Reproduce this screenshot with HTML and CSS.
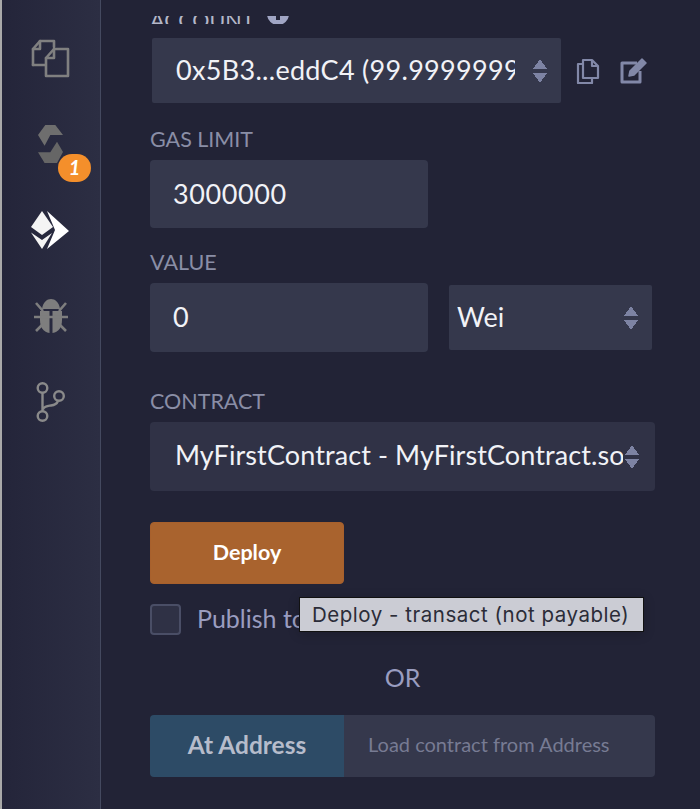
FILE: index.html
```html
<!DOCTYPE html>
<html lang="en">
<head>
  <meta charset="UTF-8">
  <meta name="viewport" content="width=device-width, initial-scale=1.0">
  <title>Deploy and run transactions</title>
  <link rel="stylesheet" href="styles.css">
</head>
<body>
  <nav class="sidebar">
    <div class="side-item">
      <svg width="40" height="40" viewBox="0 0 40 40" fill="none" stroke="#808080" stroke-width="2.600" stroke-linejoin="round" stroke-linecap="round">
        <path d="M2 27V11L9 3H23V9"/>
        <path d="M2 11H9V3"/>
        <path d="M2 27H14"/>
        <path d="M15 20L23 11H37V38H15Z"/>
        <path d="M15 20H23V11"/>
      </svg>
    </div>
    <div class="side-item">
      <svg width="26" height="38" viewBox="0 0 26 38">
        <path d="M0 10L7.300 0H17.300L25 10H12.300L6.600 20.700Z" fill="#6e6e6e"/>
        <path d="M0 27.300H12.300L19 16.700L25 27L19 38H6.600Z" fill="#666"/>
      </svg>
      <span class="badge">1</span>
    </div>
    <div class="side-item">
      <svg width="40" height="40" viewBox="0 0 40 40" fill="#fff">
        <path d="M11 1L0 17L11 25L22 17Z" fill="#f4f4f4"/>
        <path d="M0 22.500L11 30L21 23L11 39Z" fill="#f4f4f4"/>
        <path d="M16 1L38 21L16 39L24 20Z"/>
      </svg>
    </div>
    <div class="side-item">
      <svg width="36" height="36" viewBox="0 0 36 36" fill="#7e7e7e">
        <path d="M9 11C10 4 14 1 18 1C22 1 26 4 27 11Z"/>
        <path d="M7 13H16.500V35C10 34 7 29 7 22Z"/>
        <path d="M29 13H19.500V35C26 34 29 29 29 22Z"/>
        <path d="M1 19H35M3 5L10 13M33 5L26 13M3 33L10 26M33 33L26 26" stroke="#7e7e7e" stroke-width="2.600" fill="none"/>
      </svg>
    </div>
    <div class="side-item">
      <svg width="30" height="40" viewBox="0 0 30 40" fill="none" stroke="#8a8a8a" stroke-width="2.400">
        <circle cx="6.500" cy="6" r="4.800"/>
        <circle cx="6.500" cy="34" r="4.800"/>
        <circle cx="23" cy="14" r="4.800"/>
        <path d="M6.500 11V29M7 27C9 24 12 24 15 23.500C19 23 21 21.500 22 19"/>
      </svg>
    </div>
  </nav>

  <main class="panel">
    <div class="label label-cut">
      <span>ACCOUNT</span>
      <span class="info-dot"></span>
    </div>
    <div class="account-row">
      <div class="select select-account">
        <span class="select-text">0x5B3...eddC4 (99.9999999999 ether)</span>
        <span class="arrows"></span>
      </div>
      <svg class="tool-icon" width="24" height="26" viewBox="0 0 24 26" fill="none" stroke="#8288a8" stroke-width="2.200" stroke-linejoin="round">
        <path d="M7 20V2H16L22 8V20Z"/>
        <path d="M16 2V8H22"/>
        <path d="M7 6H2V25H16V20"/>
      </svg>
      <svg class="tool-icon tool-edit" width="28" height="26" viewBox="0 0 28 26" fill="none" stroke="#8288a8" stroke-width="3" stroke-linejoin="round">
        <path d="M17 5H2V24H20V13"/>
        <path d="M10 13L9 18L14 17L26 5L22 1Z" fill="#8288a8" stroke-width="1.500"/>
      </svg>
    </div>

    <div class="label label-gas">GAS LIMIT</div>
    <div class="input input-half">3000000</div>

    <div class="label label-value">VALUE</div>
    <div class="value-row">
      <div class="input input-half">0</div>
      <div class="select select-unit">
        <span class="select-text">Wei</span>
        <span class="arrows"></span>
      </div>
    </div>

    <div class="label label-contract">CONTRACT</div>
    <div class="select select-contract">
      <span class="select-text">MyFirstContract - MyFirstContract.sol</span>
      <span class="arrows"></span>
    </div>

    <button class="btn-deploy">Deploy</button>

    <div class="publish-row">
      <span class="checkbox"></span>
      <span class="publish-text">Publish to IPFS</span>
      <div class="tooltip">Deploy - transact (not payable)</div>
    </div>

    <div class="or">OR</div>

    <div class="address-row">
      <button class="btn-address">At Address</button>
      <div class="address-input">Load contract from Address</div>
    </div>
  </main>
</body>
</html>
```

FILE: styles.css
```css
* {
  box-sizing: border-box;
}

html, body {
  height: 100%;
}

body {
  margin: 0;
  display: flex;
  overflow: hidden;
  background: #222336;
  color: #f1f2f7;
  font-family: "Lato", "Noto Sans", sans-serif;
}

.sidebar {
  width: 101px;
  flex: none;
  padding-top: 15px;
  background: linear-gradient(to right, #24253a, #2c2e43);
  border-left: 2px solid #a9a9a9;
  border-right: 1px solid #44495f;
}

.side-item {
  position: relative;
  height: 86px;
  display: flex;
  align-items: center;
  justify-content: center;
}

.badge {
  position: absolute;
  left: 56px;
  top: 53px;
  width: 33px;
  height: 28px;
  border-radius: 14px;
  background: #f48f2b;
  color: #fff;
  font-size: 20px;
  font-weight: 700;
  font-style: italic;
  line-height: 27px;
  text-align: center;
}

.panel {
  flex: 1;
  padding: 16px 45px 0 49px;
}

.label {
  color: #8a8ea6;
  font-size: 21.500px;
  line-height: 24px;
}

.label-cut {
  height: 8px;
  overflow: hidden;
  display: flex;
  align-items: flex-end;
  gap: 13px;
  line-height: 8px;
  color: #b4b7c8;
}

.info-dot {
  position: relative;
  width: 22px;
  height: 22px;
  flex: none;
  border-radius: 50%;
  background: #a0a5c4;
  margin-bottom: -1px;
}

.info-dot::after {
  content: "";
  position: absolute;
  left: 9px;
  bottom: 5px;
  width: 4px;
  height: 12px;
  background: #222336;
}

.account-row {
  display: flex;
  align-items: center;
  margin-top: 14px;
}

.select {
  display: flex;
  align-items: center;
  background: #35384c;
  font-size: 27px;
}

.select-text {
  flex: 1;
  min-width: 0;
  padding-bottom: 3px;
  overflow: hidden;
  white-space: nowrap;
}

.arrows {
  flex: none;
  width: 14px;
  height: 24px;
  background:
    linear-gradient(to top left, #7d83a3 50%, transparent 50%) left top / 7px 10px no-repeat,
    linear-gradient(to top right, #7d83a3 50%, transparent 50%) right top / 7px 10px no-repeat,
    linear-gradient(to bottom left, #7d83a3 50%, transparent 50%) left bottom / 7px 10px no-repeat,
    linear-gradient(to bottom right, #7d83a3 50%, transparent 50%) right bottom / 7px 10px no-repeat;
}

.select-account {
  width: 409px;
  height: 65px;
  margin-left: 2px;
  padding: 0 14px 0 24px;
  gap: 18px;
  border-radius: 2px;
  letter-spacing: 0.300px;
}

.tool-icon {
  margin-left: 15px;
}

.tool-edit {
  margin-left: 20px;
}

.input {
  display: flex;
  align-items: center;
  height: 68px;
  padding: 0 0 2px 23px;
  background: #35384c;
  border-radius: 4px;
  font-size: 27px;
  letter-spacing: 0.600px;
}

.input-half {
  width: 278px;
}

.label-gas {
  margin-top: 24px;
}

.label-value {
  margin-top: 22px;
}

.label-contract {
  margin-top: 37px;
}

.label-value + .value-row {
  margin-top: 9px;
}

.label-gas + .input,
.label-contract + .select {
  margin-top: 9px;
}

.value-row {
  display: flex;
  align-items: center;
  gap: 21px;
}

.value-row .input {
  height: 69px;
}

.select-unit {
  width: 203px;
  height: 65px;
  padding: 0 14px 0 8px;
  border-radius: 2px;
}

.select-contract {
  width: 505px;
  height: 69px;
  padding: 0 16px 0 25px;
  background: #303246;
  border-radius: 4px;
  letter-spacing: 0.100px;
}

.select-contract .select-text {
  margin-right: 2px;
  padding-bottom: 5px;
}

.btn-deploy {
  display: block;
  width: 194px;
  height: 62px;
  margin-top: 31px;
  padding-bottom: 4px;
  border: 1px solid #a8602c;
  border-radius: 4px;
  background: #a9632e;
  color: #fff;
  font-family: inherit;
  font-size: 21.500px;
  font-weight: 700;
}

.publish-row {
  position: relative;
  display: flex;
  align-items: center;
  gap: 16px;
  margin-top: 20px;
}

.checkbox {
  width: 31px;
  height: 31px;
  border: 2px solid #4a4e66;
  border-radius: 4px;
  background: #2f3145;
}

.publish-text {
  padding-bottom: 3px;
  color: #9a9dc0;
  font-size: 25px;
  line-height: 28px;
}

.tooltip {
  position: absolute;
  left: 149px;
  top: -7px;
  width: 345px;
  height: 35px;
  padding-left: 12px;
  background: #cbccd4;
  border: 1px solid #111;
  color: #2b2c38;
  font-family: "Inter", sans-serif;
  font-size: 20.500px;
  letter-spacing: 0.520px;
  line-height: 33px;
  white-space: nowrap;
  box-shadow: 0 2px 12px rgba(0, 0, 0, 0.2);
}

.or {
  width: 505px;
  margin-top: 25px;
  color: #9a9dc0;
  font-size: 25px;
  line-height: 34px;
  text-align: center;
}

.address-row {
  display: flex;
  width: 505px;
  height: 62px;
  margin-top: 21px;
  border-radius: 4px;
  overflow: hidden;
}

.btn-address {
  width: 194px;
  padding-bottom: 4px;
  border: 0;
  background: #2d4b66;
  color: #b6bccb;
  font-family: inherit;
  font-size: 24.500px;
  font-weight: 700;
}

.address-input {
  flex: 1;
  display: flex;
  align-items: center;
  padding: 0 0 4px 24px;
  background: #35384c;
  color: #777b93;
  font-size: 20px;
}
```
